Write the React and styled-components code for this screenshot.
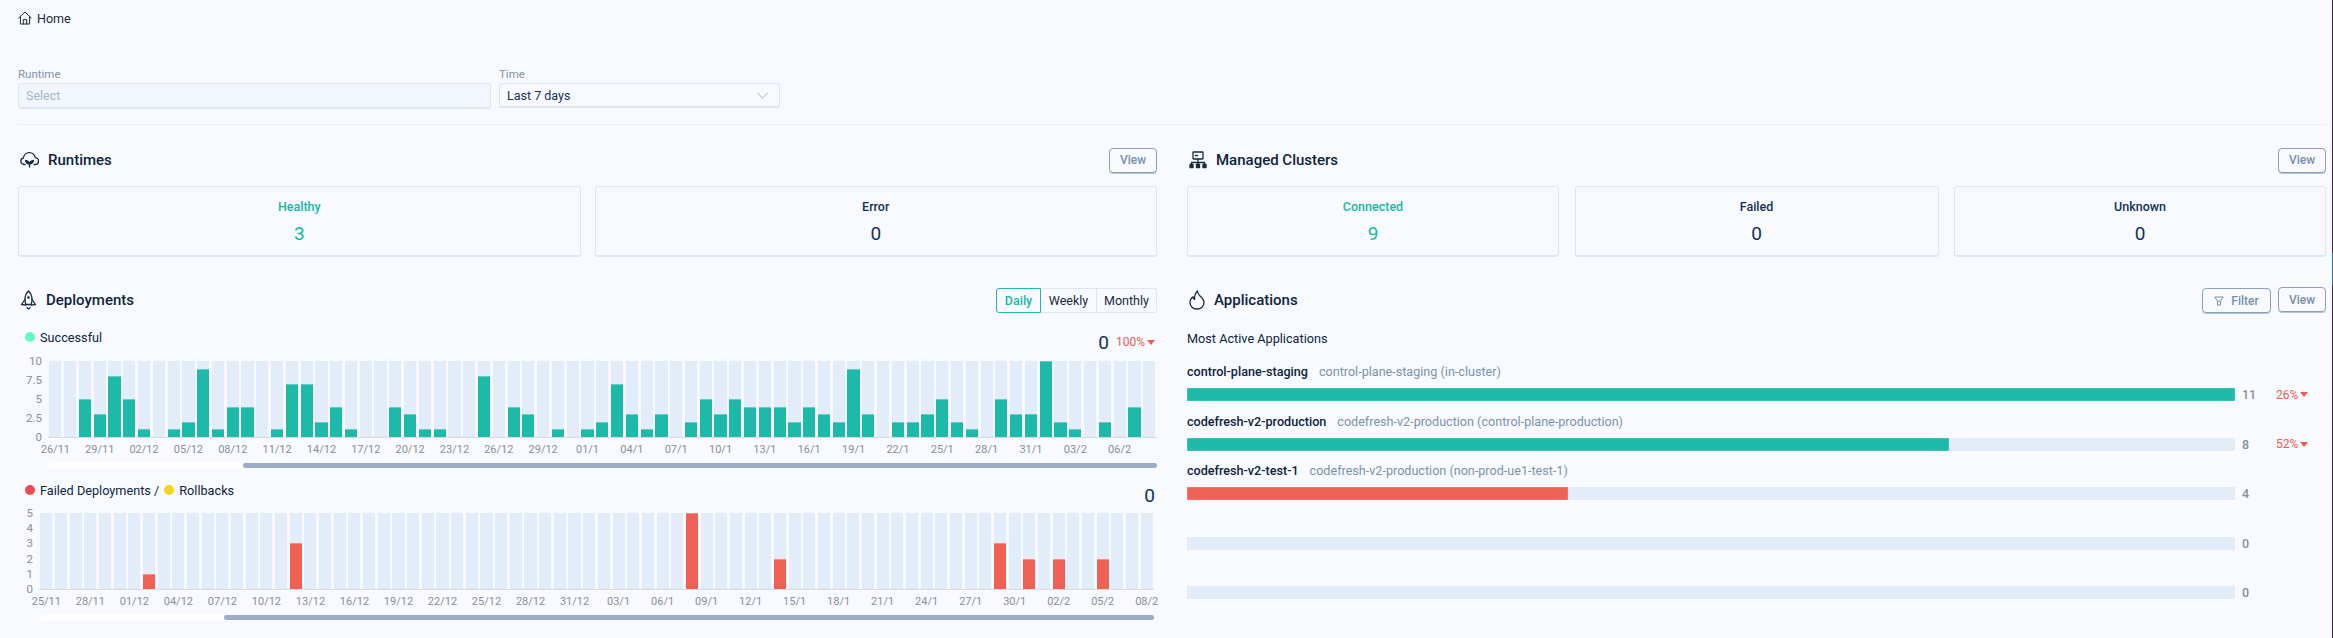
import React from "react";
import styled, { createGlobalStyle } from "styled-components";

const Global = createGlobalStyle`
  html, body { margin: 0; padding: 0; background: #f8faff; }
  body { font-family: Roboto, "Noto Sans", "Liberation Sans", sans-serif; color: #0e2440; }
  * { box-sizing: border-box; }
`;

const Page = styled.div`
  display: flex;
  width: 2333px;
  height: 638px;
  overflow: hidden;
  background: #f8faff;
`;
const Main = styled.main`
  flex: 1;
  min-width: 0;
  padding: 8px 6px 0 18px;
`;
const Edge = styled.div`
  width: 1px;
  background: linear-gradient(to bottom, #4a1f4f 0 253px, #1f7fb8 253px 285px, #4a1f4f 285px);
`;
const Crumb = styled.div`
  display: flex;
  align-items: center;
  gap: 5px;
  height: 20px;
  font-size: 12.5px;
  color: #1a2a3f;
`;
const Filters = styled.div`
  display: flex;
  gap: 8px;
  margin-top: 39px;
`;
const Field = styled.div`
  width: ${(p) => p.$w}px;
`;
const FieldLabel = styled.div`
  height: 16px;
  font-size: 11.5px;
  line-height: 14px;
  color: #7e92ab;
`;
const Control = styled.div`
  display: flex;
  align-items: center;
  justify-content: space-between;
  height: ${(p) => (p.$muted ? 26 : 25)}px;
  padding: 0 11px 0 7px;
  font-size: 12.5px;
  color: ${(p) => (p.$muted ? "#a6b6ca" : "#15325a")};
  background: ${(p) => (p.$muted ? "#f2f6fe" : "#f8faff")};
  border: 1px solid #dde6f3;
  border-bottom-width: 2px;
  border-radius: 3px;
`;
const Divider = styled.div`
  height: 1px;
  margin-top: 15px;
  background: #e9eef7;
`;
const Columns = styled.div`
  display: grid;
  grid-template-columns: 1139px 1139px;
  column-gap: 30px;
  row-gap: 30px;
  margin-top: 22px;
`;
const SectionHead = styled.div`
  display: flex;
  align-items: center;
  justify-content: space-between;
  height: 26px;
`;
const Title = styled.h2`
  display: flex;
  align-items: center;
  gap: 9px;
  margin: 0;
  padding-left: 2px;
  font-size: 15px;
  font-weight: 500;
  color: #0e2440;
`;
const Actions = styled.div`
  display: flex;
  gap: 7px;
`;
const OutlineButton = styled.button`
  display: flex;
  align-items: center;
  justify-content: center;
  gap: 7px;
  width: ${(p) => p.$w || 48}px;
  height: 25px;
  padding: 0;
  font: 500 12px Roboto, sans-serif;
  color: #7890ab;
  background: transparent;
  border: 1px solid #8aa0ba;
  border-radius: 4px;
  box-shadow: 0 1px 0 #b6c4d6;
  margin-top: ${(p) => p.$mt || 0}px;
`;
const Cards = styled.div`
  display: grid;
  grid-template-columns: ${(p) => p.$cols};
  column-gap: ${(p) => p.$gap}px;
  margin-top: 13px;
`;
const Card = styled.div`
  height: 71px;
  padding-top: 11px;
  text-align: center;
  border: 1px solid #dfe7f3;
  border-bottom-width: 2px;
  border-radius: 3px;
`;
const CardLabel = styled.div`
  font-size: 12.5px;
  font-weight: 500;
  line-height: 18px;
  color: ${(p) => (p.$ok ? "#16b9a1" : "#14325a")};
`;
const CardValue = styled.div`
  margin-top: 6px;
  font-size: 19px;
  line-height: 24px;
  color: ${(p) => (p.$ok ? "#16b9a1" : "#14325a")};
`;
const Toggle = styled.div`
  display: flex;
  height: 25px;
  font-size: 12.5px;
`;
const ToggleItem = styled.div`
  display: flex;
  align-items: center;
  justify-content: center;
  width: ${(p) => p.$w}px;
  color: ${(p) => (p.$on ? "#16b9a1" : "#1a2a3f")};
  font-weight: ${(p) => (p.$on ? 500 : 400)};
  border: 1px solid ${(p) => (p.$on ? "#1db9a9" : "#dde6f3")};
  border-left-width: ${(p) => (p.$on ? 1 : 0)}px;
  border-radius: ${(p) => (p.$on ? "3px 0 0 3px" : p.$last ? "0 3px 3px 0" : "0")};
`;
const ChartHead = styled.div`
  display: flex;
  justify-content: space-between;
  margin-top: ${(p) => p.$mt}px;
  margin-bottom: ${(p) => p.$mb}px;
  padding: 0 2px 0 7px;
`;
const Legend = styled.div`
  display: flex;
  align-items: center;
  gap: 5px;
  height: 20px;
  font-size: 12.7px;
  color: #0e2440;
`;
const Dot = styled.span`
  width: 10px;
  height: 10px;
  border-radius: 50%;
  background: ${(p) => p.$c};
`;
const Metric = styled.div`
  display: flex;
  align-items: center;
  gap: 7px;
  height: 20px;
  margin-top: 5px;
  font-size: 19px;
  color: #14325a;
`;
const Pct = styled.span`
  display: inline-flex;
  align-items: center;
  gap: 2px;
  font-size: 12px;
  color: #ef5b4e;
`;
const Caret = styled.i`
  width: 0;
  height: 0;
  border-left: 4px solid transparent;
  border-right: 4px solid transparent;
  border-top: 5px solid #ef5b4e;
`;
const ChartGrid = styled.div`
  display: grid;
  grid-template-columns: ${(p) => p.$axis}px 1fr;
  padding-right: ${(p) => p.$pr}px;
`;
const YAxis = styled.div`
  display: flex;
  flex-direction: column;
  justify-content: space-between;
  height: 88px;
  margin: -6px 0 -5px;
  padding-right: 6px;
  text-align: right;
  font-size: 11.5px;
  line-height: 12px;
  color: #8b8f96;
`;
const Plot = styled.div`
  display: flex;
  height: 77px;
  border-bottom: 1px solid #d5d9e0;
`;
const Slot = styled.div`
  flex: 1;
  min-width: 0;
  display: flex;
  align-items: flex-end;
  padding: 0 1.3px;
`;
const Track = styled.div`
  display: flex;
  align-items: flex-end;
  width: 100%;
  height: 100%;
  background: #e3edf9;
`;
const Fill = styled.div`
  width: 100%;
  background: ${(p) => p.$c};
  box-shadow: inset 0 1px 0 rgba(255, 255, 255, 0.3);
`;
const XAxis = styled.div`
  grid-column: 2;
  display: flex;
  height: 14px;
  margin-top: 5px;
`;
const XSlot = styled.div`
  flex: 1;
  min-width: 0;
  display: flex;
  justify-content: center;
  white-space: nowrap;
  font-size: 11px;
  line-height: 14px;
  color: #8b8f96;
`;
const Scroll = styled.div`
  grid-column: 2;
  position: relative;
  height: 5px;
  margin-top: 6px;
  background: #fff;
  border-radius: 2px;
`;
const Thumb = styled.div`
  position: absolute;
  top: 0;
  bottom: 0;
  right: 0;
  left: ${(p) => p.$left}px;
  background: #9dadc6;
  border-radius: 2px;
`;
const Subhead = styled.div`
  height: 20px;
  margin-top: 16px;
  font-size: 12.7px;
  line-height: 20px;
  color: #0e2440;
`;
const AppList = styled.div`
  display: flex;
  flex-direction: column;
  gap: 10.6px;
  margin-top: 13px;
`;
const AppRow = styled.div`
  display: flex;
  flex-direction: column;
  gap: 6px;
`;
const AppName = styled.div`
  display: flex;
  gap: 11px;
  height: 20px;
  font-size: 12.6px;
  line-height: 20px;
`;
const Strong = styled.span`
  font-weight: 500;
  color: #0e2440;
`;
const Desc = styled.span`
  color: #7b93ad;
`;
const BarLine = styled.div`
  display: flex;
  align-items: center;
  height: 13px;
`;
const BarTrack = styled.div`
  width: 1048px;
  height: 13px;
  background: #e3edf9;
`;
const BarFill = styled.div`
  height: 100%;
  background: ${(p) => p.$c};
  box-shadow: inset 0 0 0 0.5px rgba(255, 255, 255, 0.25);
`;
const Count = styled.span`
  width: 41px;
  padding-left: 7px;
  font-size: 12.5px;
  font-weight: 500;
  color: #8c8f94;
`;

const fmt = (start, i) => {
  const d = new Date(Date.UTC(2023, 10, start + i));
  return `${String(d.getUTCDate()).padStart(2, "0")}/${d.getUTCMonth() + 1}`;
};

const Chart = ({ data, max, ticks, color, start, axis, pr, thumb }) => (
  <ChartGrid $axis={axis} $pr={pr}>
    <YAxis>
      {ticks.map((t) => (
        <div key={t}>{t}</div>
      ))}
    </YAxis>
    <Plot>
      {data.map((v, i) => (
        <Slot key={i}>
          <Track>
            <Fill $c={color} style={{ height: `${(v / max) * 100}%` }} />
          </Track>
        </Slot>
      ))}
    </Plot>
    <XAxis>
      {data.map((_, i) => (
        <XSlot key={i}>{i % 3 === 0 ? fmt(start, i) : ""}</XSlot>
      ))}
    </XAxis>
    <Scroll>
      <Thumb $left={thumb} />
    </Scroll>
  </ChartGrid>
);

const stroke = { fill: "none", stroke: "#1a2a3f", strokeWidth: 1.3, strokeLinecap: "round", strokeLinejoin: "round" };

const HomeIcon = () => (
  <svg width="14" height="14" viewBox="0 0 14 14" {...stroke} strokeWidth="1">
    <path d="M.8 7 7 1l6.2 6M2.4 5.8V13h9.2V5.8" />
    <path d="M5.3 13V8.6h3.4V13" />
  </svg>
);
const CloudIcon = () => (
  <svg width="19" height="18" viewBox="0 0 19 18" {...stroke}>
    <path d="M5 13.5H4a3.3 3.3 0 0 1-.6-6.5 6 6 0 0 1 11.9-.3 3.4 3.4 0 0 1-.4 6.8H14" />
    <path d="M5.6 9.5c1.6.2 3.2 1.2 3.9 3.2.7-2 2.3-3 3.9-3.2-.3 2-1.6 3.4-3.9 3.6-2.3-.2-3.600-1.600-3.900-3.600Z" fill="#1a2a3f" />
    <path d="M9.500 13v3" />
  </svg>
);
const ClusterIcon = () => (
  <svg width="18" height="18" viewBox="0 0 18 18" {...stroke}>
    <rect x="4" y="1" width="10" height="7" rx=".5" />
    <path d="M6.500 4.500h2" />
    <path d="M9 8v4M2.500 13.500V11.500h13v2M9 11.500v2" />
    <rect x="1" y="13.500" width="3" height="3" fill="#1a2a3f" />
    <rect x="7.500" y="13.500" width="3" height="3" fill="#1a2a3f" />
    <rect x="14" y="13.500" width="3" height="3" fill="#1a2a3f" />
  </svg>
);
const RocketIcon = () => (
  <svg width="17" height="20" viewBox="0 0 17 20" {...stroke}>
    <path d="M8.500 1C5.800 3.500 5 6.500 5 9.500c0 1.700.3 3.400.8 5h5.400c.5-1.600.8-3.300.8-5 0-3-.8-6-3.500-8.500Z" />
    <path d="M5 9.500 1.500 14.500l4.300.6M12 9.500l3.500 5-4.300.6M7 17.500c.4.800.9 1.200 1.500 1.500.6-.3 1.100-.7 1.500-1.500" />
    <circle cx="8.500" cy="7.500" r=".7" fill="#1a2a3f" />
  </svg>
);
const FlameIcon = () => (
  <svg width="16" height="20" viewBox="0 0 16 20" {...stroke}>
    <path d="M8.500 1c.2 2.400 1 3.600 2.800 5.300C13.500 8.300 15 10 15 12.500 15 16.300 12 19 8 19s-7-2.700-7-6.500c0-2.400 1.200-4.300 3-5.700.2 1.300.7 2.100 1.600 2.700C5.300 5.800 6.300 3 8.500 1Z" />
  </svg>
);
const FilterIcon = () => (
  <svg width="10" height="10" viewBox="0 0 10 10" fill="none" stroke="#7890ab" strokeWidth="1">
    <path d="M.8 1h8.400L6.500 5.200H3.500ZM3.500 5.200V9h3V5.200" />
  </svg>
);
const Chevron = () => (
  <svg width="11" height="7" viewBox="0 0 11 7" fill="none" stroke="#a6b6ca" strokeWidth="1">
    <path d="M.5.500 5.500 6.500 10.500.500" />
  </svg>
);

const success = [0,0,5,3,8,5,1,0,1,2,9,1,4,4,0,1,7,7,2,4,1,0,0,4,3,1,1,0,0,8,0,4,3,0,1,0,1,2,7,3,1,3,0,2,5,3,5,4,4,4,2,4,3,2,9,3,0,2,2,3,5,2,1,0,5,3,3,10,2,1,0,2,0,4,0];
const failed = Array.from({ length: 76 }, () => 0);
[[7,1],[17,3],[44,5],[50,2],[65,3],[67,2],[69,2],[72,2]].forEach(([i, v]) => { failed[i] = v; });

const TEAL = "#1db9a9";
const RED = "#ef6154";

const apps = [
  { name: "control-plane-staging", desc: "control-plane-staging (in-cluster)", n: 11, c: TEAL, pct: "26%" },
  { name: "codefresh-v2-production", desc: "codefresh-v2-production (control-plane-production)", n: 8, c: TEAL, pct: "52%" },
  { name: "codefresh-v2-test-1", desc: "codefresh-v2-production (non-prod-ue1-test-1)", n: 4, c: RED },
  { n: 0, c: TEAL },
  { n: 0, c: TEAL },
];

export default function App() {
  return (
    <Page>
      <Global />
      <Main>
        <Crumb><HomeIcon />Home</Crumb>
        <Filters>
          <Field $w={473}>
            <FieldLabel>Runtime</FieldLabel>
            <Control $muted>Select</Control>
          </Field>
          <Field $w={281}>
            <FieldLabel>Time</FieldLabel>
            <Control>Last 7 days<Chevron /></Control>
          </Field>
        </Filters>
        <Divider />
        <Columns>
          <section>
            <SectionHead>
              <Title><CloudIcon />Runtimes</Title>
              <OutlineButton>View</OutlineButton>
            </SectionHead>
            <Cards $gap={14} $cols="1fr 1fr">
              <Card><CardLabel $ok>Healthy</CardLabel><CardValue $ok>3</CardValue></Card>
              <Card><CardLabel>Error</CardLabel><CardValue>0</CardValue></Card>
            </Cards>
          </section>
          <section>
            <SectionHead>
              <Title><ClusterIcon />Managed Clusters</Title>
              <OutlineButton>View</OutlineButton>
            </SectionHead>
            <Cards $gap={15.5} $cols="372px 364px 372px">
              <Card><CardLabel $ok>Connected</CardLabel><CardValue $ok>9</CardValue></Card>
              <Card><CardLabel>Failed</CardLabel><CardValue>0</CardValue></Card>
              <Card><CardLabel>Unknown</CardLabel><CardValue>0</CardValue></Card>
            </Cards>
          </section>
          <section>
            <SectionHead>
              <Title><RocketIcon />Deployments</Title>
              <Toggle>
                <ToggleItem $on $w={45}>Daily</ToggleItem>
                <ToggleItem $w={56}>Weekly</ToggleItem>
                <ToggleItem $w={60} $last>Monthly</ToggleItem>
              </Toggle>
            </SectionHead>
            <ChartHead $mt={14} $mb={9}>
              <Legend><Dot $c="#62fcc0" />Successful</Legend>
              <Metric>0<Pct>100%<Caret /></Pct></Metric>
            </ChartHead>
            <Chart data={success} max={10} ticks={[10, 7.5, 5, 2.5, 0]} color={TEAL} start={26} axis={30} pr={0} thumb={195} />
            <ChartHead $mt={12} $mb={8}>
              <Legend>
                <Dot $c="#ef4a50" />Failed Deployments /<Dot $c="#f2d716" />Rollbacks
              </Legend>
              <Metric>0</Metric>
            </ChartHead>
            <Chart data={failed} max={5} ticks={[5, 4, 3, 2, 1, 0]} color={RED} start={25} axis={21} pr={3} thumb={185} />
          </section>
          <section>
            <SectionHead>
              <Title><FlameIcon />Applications</Title>
              <Actions>
                <OutlineButton $w={69} $mt={1}><FilterIcon />Filter</OutlineButton>
                <OutlineButton>View</OutlineButton>
              </Actions>
            </SectionHead>
            <Subhead>Most Active Applications</Subhead>
            <AppList>
              {apps.map((a, i) => (
                <AppRow key={i}>
                  <AppName>
                    {a.name && <Strong>{a.name}</Strong>}
                    {a.desc && <Desc>{a.desc}</Desc>}
                  </AppName>
                  <BarLine>
                    <BarTrack>
                      <BarFill $c={a.c} style={{ width: `${(a.n / 11) * 100}%` }} />
                    </BarTrack>
                    <Count>{a.n}</Count>
                    {a.pct && <Pct>{a.pct}<Caret /></Pct>}
                  </BarLine>
                </AppRow>
              ))}
            </AppList>
          </section>
        </Columns>
      </Main>
      <Edge />
    </Page>
  );
}
